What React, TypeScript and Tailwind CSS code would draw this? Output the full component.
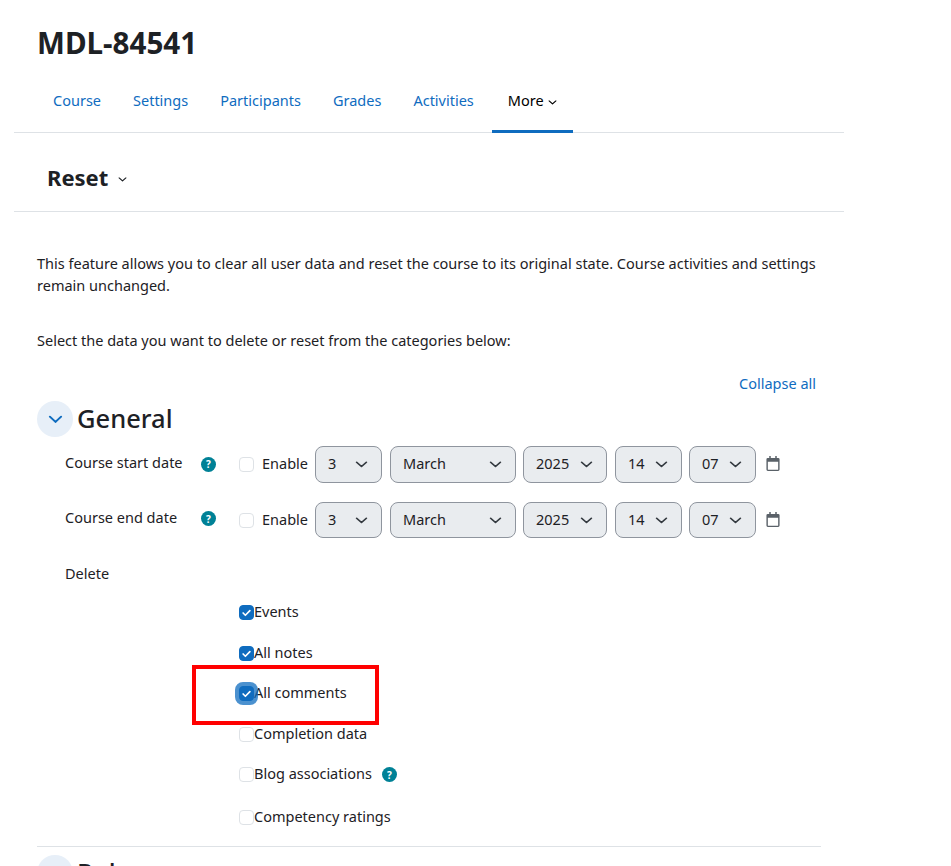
import React from "react";

function Chevron({ className = "" }: { className?: string }) {
  return (
    <svg viewBox="0 0 12 8" className={className} fill="none" stroke="currentColor" strokeWidth="1.6" strokeLinecap="round" strokeLinejoin="round" preserveAspectRatio="none">
      <path d="M1.500 1.500 6 6.200 10.500 1.500" />
    </svg>
  );
}

function Help({ className = "" }: { className?: string }) {
  return (
    <span className={`flex h-[15px] w-[15px] shrink-0 items-center justify-center rounded-full bg-[#008196] text-[10px] font-bold leading-none text-white ${className}`}>?</span>
  );
}

function Sel({ value, w, pb }: { value: string; w: string; pb: string }) {
  return (
    <div className={`flex h-full items-center justify-between rounded-[8px] border border-[#8f959e] bg-[#e9ecef] pl-[12px] pr-[13px] text-[14.5px] text-[#1d2125] ${w}`}>
      <span className={pb}>{value}</span>
      <Chevron className="h-[7px] w-[13px] text-[#343a40]" />
    </div>
  );
}

function Calendar() {
  return (
    <svg viewBox="0 0 14 16" className="mb-[2px] h-[15px] w-[14px] text-[#5a6168]" fill="currentColor">
      <path d="M3 0h1.600v2h4.800V0H11v2h1.500A1.500 1.500 0 0 1 14 3.500v11a1.500 1.500 0 0 1-1.500 1.500h-11A1.500 1.500 0 0 1 0 14.500v-11A1.500 1.500 0 0 1 1.500 2H3V0Zm-1.500 6v8.300c0 .2.100.300.300.300h10.400c.2 0 .3-.1.3-.3V6H1.500Z" />
    </svg>
  );
}

function DateRow({ label, h, mt, labelPb, selPb }: { label: string; h: string; mt: string; labelPb: string; selPb: string }) {
  return (
    <div className={`flex items-center ${h} ${mt}`}>
      <div className={`flex w-[179px] items-center pl-[28px] ${labelPb}`}>
        <span className="w-[136px] shrink-0 pb-[2px]">{label}</span>
        <Help />
      </div>
      <div className="ml-[23px] h-[15px] w-[15px] rounded-[4px] border border-[#dee2e6] bg-white" />
      <span className="ml-[8px] w-[53px] pb-[1px]">Enable</span>
      <Sel value="3" w="w-[67px]" pb={selPb} />
      <div className="w-[8px]" />
      <Sel value="March" w="w-[126px]" pb={selPb} />
      <div className="w-[7px]" />
      <Sel value="2025" w="w-[84px]" pb={selPb} />
      <div className="w-[8px]" />
      <Sel value="14" w="w-[67px]" pb={selPb} />
      <div className="w-[7px]" />
      <Sel value="07" w="w-[67px]" pb={selPb} />
      <div className="ml-[10px]"><Calendar /></div>
    </div>
  );
}

function Check({ label, on, focus, help, mt }: { label: string; on?: boolean; focus?: boolean; help?: boolean; mt: string }) {
  return (
    <div className={`flex h-[15px] items-center pl-[202px] ${mt}`}>
      <span className={`relative flex h-[15px] w-[15px] shrink-0 items-center justify-center rounded-[4px] border ${on ? "border-[#0f6cbf] bg-[#0f6cbf]" : "border-[#dee2e6] bg-white"} ${focus ? "shadow-[0_0_0_4px_rgba(15,108,191,0.75)]" : ""}`}>
        {on && (
          <svg viewBox="0 0 12 10" className="h-[8px] w-[9px]" fill="none" stroke="white" strokeWidth="2.2" strokeLinecap="round" strokeLinejoin="round">
            <path d="M1.500 5 4.500 8 10.500 1.800" />
          </svg>
        )}
      </span>
      <span className="pb-[2px]">{label}</span>
      {help && <Help className="ml-[10px]" />}
    </div>
  );
}

export default function App() {
  return (
    <div className="relative h-[866px] w-[951px] overflow-hidden bg-white font-['Noto_Sans',sans-serif] text-[14.5px] text-[#1d2125]">
      <div className="w-[830px] pl-[14px]">
        <h1 className="flex h-[88px] items-center pb-[2px] pl-[23px] text-[29.6px] font-bold">MDL-84541</h1>
        <nav className="flex h-[45px] w-[830px] border-b border-[#dee2e6] pl-[23px]">
          {["Course", "Settings", "Participants", "Grades", "Activities"].map((t) => (
            <span key={t} className="flex h-[45px] items-center px-[16px] pb-[19px] text-[#0f6cbf]">{t}</span>
          ))}
          <span className="ml-[2px] flex h-[45px] items-center gap-[4px] border-b-[3px] border-[#0f6cbf] px-[16px] pb-[16px] text-black">
            More <Chevron className="mt-[2px] h-[5px] w-[9px]" />
          </span>
        </nav>
        <div className="flex h-[79px] w-[830px] items-center border-b border-[#dee2e6] pl-[33px] pt-[10px]">
          <span className="text-[22px] font-bold">Reset</span>
          <Chevron className="ml-[10px] mt-[5px] h-[5px] w-[9px]" />
        </div>
      </div>

      <div className="w-[821px] pl-[37px]">
        <p className="mt-[40px] w-[790px] leading-[22px]">
          This feature allows you to clear all user data and reset the course to its original state. Course activities and settings remain unchanged.
        </p>
        <p className="mt-[33px] leading-[22px]">Select the data you want to delete or reset from the categories below:</p>
        <div className="mt-[22px] flex h-[22px] justify-end pr-[5px] text-[#0f6cbf]">Collapse all</div>
        <div className="mt-[6px] flex h-[36px] items-center">
          <span className="flex h-[36px] w-[36px] items-center justify-center rounded-full bg-[#e7eff8] text-[#0f6cbf]">
            <Chevron className="h-[9px] w-[15px]" />
          </span>
          <h3 className="ml-[4px] pb-[2px] text-[25.5px] font-medium">General</h3>
        </div>
        <DateRow label="Course start date" h="h-[37px]" mt="mt-[9px]" labelPb="pb-[1px]" selPb="pb-[2px]" />
        <DateRow label="Course end date" h="h-[36px]" mt="mt-[19px]" labelPb="pb-[3px]" selPb="pb-[1px]" />
        <div className="mt-[25px] flex h-[22px] items-center pl-[28px]">Delete</div>
        <Check label="Events" on mt="mt-[20px]" />
        <Check label="All notes" on mt="mt-[26px]" />
        <Check label="All comments" on focus mt="mt-[25px]" />
        <Check label="Completion data" mt="mt-[26px]" />
        <Check label="Blog associations" help mt="mt-[25px]" />
        <Check label="Competency ratings" mt="mt-[28px]" />
        <div className="mt-[21px] border-t border-[#dee2e6]" />
        <div className="mt-[8px] flex h-[36px] items-center">
          <span className="h-[36px] w-[36px] shrink-0 rounded-full bg-[#e7eff8]" />
          <h3 className="ml-[4px] pb-[2px] text-[25.5px] font-medium">Roles</h3>
        </div>
      </div>

      <div className="absolute left-[192px] top-[665px] h-[60px] w-[187px] border-[4px] border-[#ff0000]" />
    </div>
  );
}
